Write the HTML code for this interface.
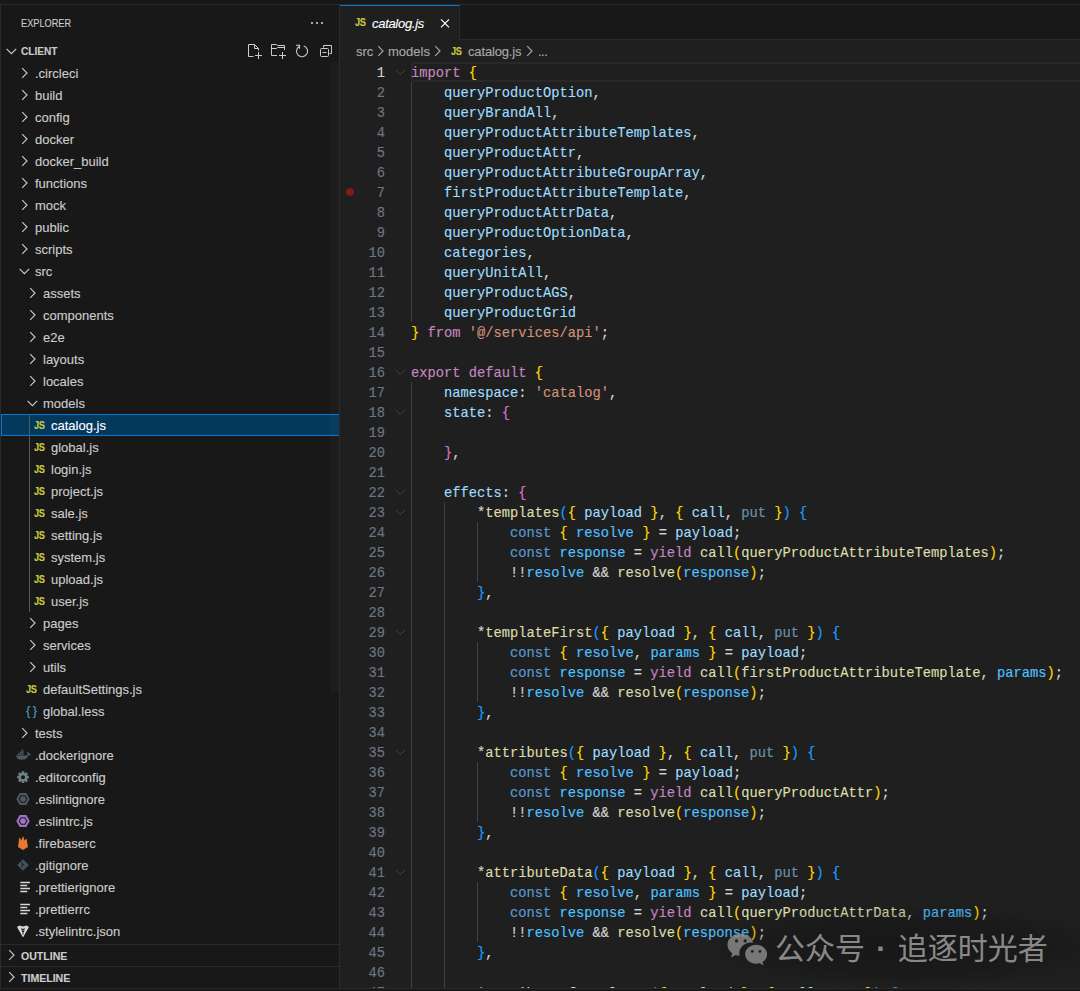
<!DOCTYPE html><html lang="en"><head><meta charset="utf-8"><title>catalog.js - client - Visual Studio Code</title><style>
*{box-sizing:border-box;margin:0;padding:0}
html,body{width:1080px;height:991px;overflow:hidden;background:#181818}
body{position:relative;font-family:"Liberation Sans",sans-serif;font-size:13px;color:#cccccc;-webkit-text-stroke:0.12px}
.abs{position:absolute}
#top{left:0;top:4px;width:1080px;height:1px;background:#2b2b2b}
#leftb{left:0;top:4px;width:1px;height:985px;background:#2b2b2b}
#botb{left:0;top:988px;width:1080px;height:1px;background:#2b2b2b}
#bot{left:0;top:989px;width:1080px;height:2px;background:#181818}
#side{left:1px;top:5px;width:339px;height:983px;background:#181818;border-right:1px solid #2b2b2b;overflow:hidden}
#ed{left:340px;top:5px;width:740px;height:983px;background:#1f1f1f;overflow:hidden}
.row{position:absolute;left:0;width:338px;height:22px;line-height:22px;white-space:nowrap;color:#cccccc}
.row .t{position:absolute;top:0}
.row svg{position:absolute}
.sel{background:#04395e;border:1px solid #0078d4;color:#ffffff;width:340px}
.js{position:absolute;top:1px;font-weight:bold;font-size:10px;color:#cbcb41;letter-spacing:-0.3px;display:inline-block;transform-origin:0 50%;transform:scaleX(.92)}
.hd{position:absolute;left:0;width:338px;height:22px;line-height:22px;font-size:11px;font-weight:bold;color:#cccccc}
.hd .t{position:absolute;left:20px;top:0;display:inline-block;transform-origin:0 50%;transform:scaleX(.92)}
.ln{position:absolute;left:0;width:45px;text-align:right;height:20px;line-height:24px;color:#6e7681}
.cl{position:absolute;left:71px;height:20px;line-height:24px;white-space:pre}
#code{font-family:"Liberation Mono",monospace;font-size:13.75px;color:#d4d4d4;-webkit-text-stroke:0.15px}
.k{color:#c586c0}.v{color:#9cdcfe}.c{color:#4fc1ff}.f{color:#dcdcaa}.s{color:#ce9178}.b{color:#569cd6}
.y{color:#ffd700}.p{color:#da70d6}.u{color:#179fff}.d{color:#9cdcfe;opacity:.6}
.ig{position:absolute;width:1px;background:#404040}
.fold{position:absolute;left:54px}
</style></head><body>
<div class="abs" id="top"></div>
<div class="abs" id="side">
<div class="abs" style="left:20px;top:9px;height:18px;line-height:18px;font-size:11px;color:#cccccc"><span style="display:inline-block;transform-origin:0 50%;transform:scaleX(.835)">EXPLORER</span></div>
<svg class="abs" style="left:308px;top:10px" width="16" height="16" viewBox="0 0 16 16"><circle cx="3" cy="8" r="1.1" fill="#ccc"/><circle cx="8" cy="8" r="1.1" fill="#ccc"/><circle cx="13" cy="8" r="1.1" fill="#ccc"/></svg>
<div class="hd" style="top:35px"><svg style="left:3px;top:3px" class="abs" width="16" height="16" viewBox="0 0 16 16"><path d="M2.6 5.8 L7.4 10.6 L12.2 5.8" fill="none" stroke="#cccccc" stroke-width="1.1"/></svg><span class="t">CLIENT</span>
<svg class="abs" style="left:245px;top:3px" width="16" height="16" viewBox="0 0 16 16" fill="none" stroke="#ccc" stroke-width="1"><path d="M7.5 13.5H2.5V1.5H8.5L12.500 5.500V7.500"/><path d="M8.5 1.5V5.5H12.5"/><path d="M12.500 9V16M9 12.500H16"/></svg>
<svg class="abs" style="left:269px;top:3px" width="16" height="16" viewBox="0 0 16 16" fill="none" stroke="#ccc" stroke-width="1"><path d="M7 12.500H1.500V1.500H6.300L7.500 2.500H14.500V7"/><path d="M1.500 5.500H6.500L7.500 4.500H14.500"/><path d="M12.500 9V16M9 12.500H16"/></svg>
<svg class="abs" style="left:293px;top:3px" width="16" height="16" viewBox="0 0 16 16" fill="none" stroke="#ccc" stroke-width="1.1"><g transform="translate(0 -.3)"><path d="M5.200 3.800A5.500 5.500 0 1 0 9.700 3.270"/><path d="M2 2.500H5.500V6"/></g></svg>
<svg class="abs" style="left:317px;top:3px" width="16" height="16" viewBox="0 0 16 16" fill="none" stroke="#ccc" stroke-width="1"><path d="M5.5 4.5V2.5H13.5V10.5H11.5"/><rect x="2.5" y="5.5" width="8" height="8" rx="1"/><path d="M4.5 9.5H8.5"/></svg>
</div>
<div class="row" style="top:57px"><svg style="left:16px;top:3px" class="abs" width="16" height="16" viewBox="0 0 16 16"><path d="M5.2 3.2 L10 8 L5.2 12.8" fill="none" stroke="#cccccc" stroke-width="1.1"/></svg><span class="t" style="left:34px;top:1px">.circleci</span></div>
<div class="row" style="top:79px"><svg style="left:16px;top:3px" class="abs" width="16" height="16" viewBox="0 0 16 16"><path d="M5.2 3.2 L10 8 L5.2 12.8" fill="none" stroke="#cccccc" stroke-width="1.1"/></svg><span class="t" style="left:34px;top:1px">build</span></div>
<div class="row" style="top:101px"><svg style="left:16px;top:3px" class="abs" width="16" height="16" viewBox="0 0 16 16"><path d="M5.2 3.2 L10 8 L5.2 12.8" fill="none" stroke="#cccccc" stroke-width="1.1"/></svg><span class="t" style="left:34px;top:1px">config</span></div>
<div class="row" style="top:123px"><svg style="left:16px;top:3px" class="abs" width="16" height="16" viewBox="0 0 16 16"><path d="M5.2 3.2 L10 8 L5.2 12.8" fill="none" stroke="#cccccc" stroke-width="1.1"/></svg><span class="t" style="left:34px;top:1px">docker</span></div>
<div class="row" style="top:145px"><svg style="left:16px;top:3px" class="abs" width="16" height="16" viewBox="0 0 16 16"><path d="M5.2 3.2 L10 8 L5.2 12.8" fill="none" stroke="#cccccc" stroke-width="1.1"/></svg><span class="t" style="left:34px;top:1px">docker_build</span></div>
<div class="row" style="top:167px"><svg style="left:16px;top:3px" class="abs" width="16" height="16" viewBox="0 0 16 16"><path d="M5.2 3.2 L10 8 L5.2 12.8" fill="none" stroke="#cccccc" stroke-width="1.1"/></svg><span class="t" style="left:34px;top:1px">functions</span></div>
<div class="row" style="top:189px"><svg style="left:16px;top:3px" class="abs" width="16" height="16" viewBox="0 0 16 16"><path d="M5.2 3.2 L10 8 L5.2 12.8" fill="none" stroke="#cccccc" stroke-width="1.1"/></svg><span class="t" style="left:34px;top:1px">mock</span></div>
<div class="row" style="top:211px"><svg style="left:16px;top:3px" class="abs" width="16" height="16" viewBox="0 0 16 16"><path d="M5.2 3.2 L10 8 L5.2 12.8" fill="none" stroke="#cccccc" stroke-width="1.1"/></svg><span class="t" style="left:34px;top:1px">public</span></div>
<div class="row" style="top:233px"><svg style="left:16px;top:3px" class="abs" width="16" height="16" viewBox="0 0 16 16"><path d="M5.2 3.2 L10 8 L5.2 12.8" fill="none" stroke="#cccccc" stroke-width="1.1"/></svg><span class="t" style="left:34px;top:1px">scripts</span></div>
<div class="row" style="top:255px"><svg style="left:16px;top:3px" class="abs" width="16" height="16" viewBox="0 0 16 16"><path d="M2.6 5.8 L7.4 10.6 L12.2 5.8" fill="none" stroke="#cccccc" stroke-width="1.1"/></svg><span class="t" style="left:34px;top:1px">src</span></div>
<div class="row" style="top:277px"><svg style="left:24px;top:3px" class="abs" width="16" height="16" viewBox="0 0 16 16"><path d="M5.2 3.2 L10 8 L5.2 12.8" fill="none" stroke="#cccccc" stroke-width="1.1"/></svg><span class="t" style="left:42px;top:1px">assets</span></div>
<div class="row" style="top:299px"><svg style="left:24px;top:3px" class="abs" width="16" height="16" viewBox="0 0 16 16"><path d="M5.2 3.2 L10 8 L5.2 12.8" fill="none" stroke="#cccccc" stroke-width="1.1"/></svg><span class="t" style="left:42px;top:1px">components</span></div>
<div class="row" style="top:321px"><svg style="left:24px;top:3px" class="abs" width="16" height="16" viewBox="0 0 16 16"><path d="M5.2 3.2 L10 8 L5.2 12.8" fill="none" stroke="#cccccc" stroke-width="1.1"/></svg><span class="t" style="left:42px;top:1px">e2e</span></div>
<div class="row" style="top:343px"><svg style="left:24px;top:3px" class="abs" width="16" height="16" viewBox="0 0 16 16"><path d="M5.2 3.2 L10 8 L5.2 12.8" fill="none" stroke="#cccccc" stroke-width="1.1"/></svg><span class="t" style="left:42px;top:1px">layouts</span></div>
<div class="row" style="top:365px"><svg style="left:24px;top:3px" class="abs" width="16" height="16" viewBox="0 0 16 16"><path d="M5.2 3.2 L10 8 L5.2 12.8" fill="none" stroke="#cccccc" stroke-width="1.1"/></svg><span class="t" style="left:42px;top:1px">locales</span></div>
<div class="row" style="top:387px"><svg style="left:24px;top:3px" class="abs" width="16" height="16" viewBox="0 0 16 16"><path d="M2.6 5.8 L7.4 10.6 L12.2 5.8" fill="none" stroke="#cccccc" stroke-width="1.1"/></svg><span class="t" style="left:42px;top:1px">models</span></div>
<div class="row sel" style="top:409px"><span class="js" style="left:32px;top:0px">JS</span><span class="t" style="left:49px;top:0px">catalog.js</span></div>
<div class="row" style="top:431px"><span class="js" style="left:33px;top:1px">JS</span><span class="t" style="left:50px;top:1px">global.js</span></div>
<div class="row" style="top:453px"><span class="js" style="left:33px;top:1px">JS</span><span class="t" style="left:50px;top:1px">login.js</span></div>
<div class="row" style="top:475px"><span class="js" style="left:33px;top:1px">JS</span><span class="t" style="left:50px;top:1px">project.js</span></div>
<div class="row" style="top:497px"><span class="js" style="left:33px;top:1px">JS</span><span class="t" style="left:50px;top:1px">sale.js</span></div>
<div class="row" style="top:519px"><span class="js" style="left:33px;top:1px">JS</span><span class="t" style="left:50px;top:1px">setting.js</span></div>
<div class="row" style="top:541px"><span class="js" style="left:33px;top:1px">JS</span><span class="t" style="left:50px;top:1px">system.js</span></div>
<div class="row" style="top:563px"><span class="js" style="left:33px;top:1px">JS</span><span class="t" style="left:50px;top:1px">upload.js</span></div>
<div class="row" style="top:585px"><span class="js" style="left:33px;top:1px">JS</span><span class="t" style="left:50px;top:1px">user.js</span></div>
<div class="row" style="top:607px"><svg style="left:24px;top:3px" class="abs" width="16" height="16" viewBox="0 0 16 16"><path d="M5.2 3.2 L10 8 L5.2 12.8" fill="none" stroke="#cccccc" stroke-width="1.1"/></svg><span class="t" style="left:42px;top:1px">pages</span></div>
<div class="row" style="top:629px"><svg style="left:24px;top:3px" class="abs" width="16" height="16" viewBox="0 0 16 16"><path d="M5.2 3.2 L10 8 L5.2 12.8" fill="none" stroke="#cccccc" stroke-width="1.1"/></svg><span class="t" style="left:42px;top:1px">services</span></div>
<div class="row" style="top:651px"><svg style="left:24px;top:3px" class="abs" width="16" height="16" viewBox="0 0 16 16"><path d="M5.2 3.2 L10 8 L5.2 12.8" fill="none" stroke="#cccccc" stroke-width="1.1"/></svg><span class="t" style="left:42px;top:1px">utils</span></div>
<div class="row" style="top:673px"><span class="js" style="left:25px;top:1px">JS</span><span class="t" style="left:42px;top:1px">defaultSettings.js</span></div>
<div class="row" style="top:695px"><span class="abs" style="left:25px;top:0;font-size:13px;color:#519aba;letter-spacing:2.5px">{}</span><span class="t" style="left:42px;top:1px">global.less</span></div>
<div class="row" style="top:717px"><svg style="left:16px;top:3px" class="abs" width="16" height="16" viewBox="0 0 16 16"><path d="M5.2 3.2 L10 8 L5.2 12.8" fill="none" stroke="#cccccc" stroke-width="1.1"/></svg><span class="t" style="left:34px;top:1px">tests</span></div>
<div class="row" style="top:739px"><svg style="left:14px;top:3px" width="16" height="16" viewBox="0 0 16 16"><g transform="translate(0.3 1.6) scale(.97 .9)"><path fill="#4d5a5e" d="M.8 7.600h10.700c.5-.2.900-.7 1-1.400.1-.8-.1-1.500-.5-2 .6-.5 1.300-.4 1.700.2.300.5.400 1 .3 1.500.7-.3 1.500-.3 2.200.1-.5 1.100-1.400 1.700-2.700 1.800-1 3-3.400 4.700-6.800 4.700-3.700 0-5.600-1.800-5.900-4.900z"/><path fill="#4d5a5e" d="M2.400 5.400h1.800v1.800H2.400zM4.500 5.400h1.800v1.800H4.500zM6.600 5.400h1.800v1.800H6.600zM4.500 3.300h1.800v1.800H4.500zM6.600 3.300h1.800v1.800H6.600zM6.600 1.200h1.800v1.800H6.600z"/></g></svg><span class="t" style="left:34px;top:1px">.dockerignore</span></div>
<div class="row" style="top:761px"><svg style="left:14px;top:3px" width="16" height="16" viewBox="0 0 16 16"><g transform="translate(8 8.200) scale(.95)"><g fill="#6d8086"><rect x="-1.400" y="-6.2" width="2.800" height="12.400" rx=".5"/><rect x="-1.400" y="-6.2" width="2.800" height="12.400" rx=".5" transform="rotate(45)"/><rect x="-1.400" y="-6.2" width="2.800" height="12.400" rx=".5" transform="rotate(90)"/><rect x="-1.400" y="-6.2" width="2.800" height="12.400" rx=".5" transform="rotate(135)"/><circle r="4.600"/></g><circle r="2.100" fill="#181818"/></g></svg><span class="t" style="left:34px;top:1px">.editorconfig</span></div>
<div class="row" style="top:783px"><svg style="left:14px;top:3px" width="16" height="16" viewBox="0 0 16 16"><path fill="#4d5a5e" d="M4.700 2h6.600L14.700 8l-3.400 6H4.700L1.300 8z"/><path fill="none" stroke="#1b1b1b" stroke-width="1.100" d="M6.100 4.700h3.800L11.800 8l-1.900 3.300H6.100L4.200 8z"/></svg><span class="t" style="left:34px;top:1px">.eslintignore</span></div>
<div class="row" style="top:805px"><svg style="left:14px;top:3px" width="16" height="16" viewBox="0 0 16 16"><path fill="#a074c4" d="M4.700 2h6.600L14.700 8l-3.400 6H4.700L1.300 8z"/><path fill="none" stroke="#1b1b1b" stroke-width="1.100" d="M6.100 4.700h3.800L11.800 8l-1.900 3.300H6.100L4.200 8z"/></svg><span class="t" style="left:34px;top:1px">.eslintrc.js</span></div>
<div class="row" style="top:827px"><svg style="left:14px;top:3px" width="16" height="16" viewBox="0 0 16 16"><path fill="#e37933" d="M3 12 L4.300 2.200 L6.400 5.200 L8 1 L9.700 5.600 L11.600 3.600 L13 12 L8 15 z"/></svg><span class="t" style="left:34px;top:1px">.firebaserc</span></div>
<div class="row" style="top:849px"><svg style="left:14px;top:3px" width="16" height="16" viewBox="0 0 16 16"><path fill="#41535b" d="M8 2.200L13.800 8 8 13.800 2.200 8z"/><path stroke="#181818" stroke-width=".9" fill="none" d="M7.300 5.500v5M7.300 6.500l2.200 2"/></svg><span class="t" style="left:34px;top:1px">.gitignore</span></div>
<div class="row" style="top:871px"><svg style="left:14px;top:3px" width="16" height="16" viewBox="0 0 16 16"><path stroke="#d4d7d6" stroke-width="1.300" d="M5.300 3.500h9.700M5.300 6.500h7M5.300 9.500h9.700M5.300 12.500h7"/></svg><span class="t" style="left:34px;top:1px">.prettierignore</span></div>
<div class="row" style="top:893px"><svg style="left:14px;top:3px" width="16" height="16" viewBox="0 0 16 16"><path stroke="#d4d7d6" stroke-width="1.300" d="M5.300 3.500h9.700M5.300 6.500h7M5.300 9.500h9.700M5.300 12.500h7"/></svg><span class="t" style="left:34px;top:1px">.prettierrc</span></div>
<div class="row" style="top:915px"><svg style="left:14px;top:3px" width="16" height="16" viewBox="0 0 16 16"><g transform="translate(8 8.500) scale(.92) translate(-8 -8.500)"><path fill="#d4d7d6" d="M1.500 3.500l2.500-1.500 4 1.200 4-1.200 2.500 1.500L8 15z"/><path fill="#181818" d="M6.200 4.500L8 6l1.800-1.500L9.300 8 8 12.500 6.700 8z"/><path fill="#d4d7d6" d="M7.500 7h1v1h-1zM7.500 9h1v1h-1z"/></g></svg><span class="t" style="left:34px;top:1px">.stylelintrc.json</span></div>
<div class="abs" style="left:28px;top:409px;width:1px;height:198px;background:#585858"></div>
<div class="abs" style="left:329px;top:57px;width:9px;height:631px;background:rgba(121,121,121,.06)"></div>
<div class="hd" style="top:939px;border-top:1px solid #2b2b2b"><svg style="left:3px;top:2px" class="abs" width="16" height="16" viewBox="0 0 16 16"><path d="M5.2 3.2 L10 8 L5.2 12.8" fill="none" stroke="#cccccc" stroke-width="1.1"/></svg><span class="t" style="top:0;transform:scaleX(.96)">OUTLINE</span></div>
<div class="hd" style="top:961px;border-top:1px solid #2b2b2b"><svg style="left:3px;top:2px" class="abs" width="16" height="16" viewBox="0 0 16 16"><path d="M5.2 3.2 L10 8 L5.2 12.8" fill="none" stroke="#cccccc" stroke-width="1.1"/></svg><span class="t" style="top:0;transform:scaleX(.96)">TIMELINE</span></div>
</div>
<div class="abs" id="ed">
<div class="abs" style="left:0;top:0;width:740px;height:35px;background:#181818;border-bottom:1px solid #2b2b2b"></div>
<div class="abs" style="left:0;top:0;width:120px;height:35px;background:#1f1f1f;border-top:1px solid #0078d4;border-right:1px solid #2b2b2b"></div>
<span class="abs" style="left:15px;top:11px;line-height:14px;font-weight:bold;font-size:10px;color:#cbcb41;letter-spacing:-0.3px;display:inline-block;transform-origin:0 50%;transform:scaleX(.92)">JS</span>
<span class="abs" style="left:32px;top:7.5px;line-height:22px;font-style:italic;color:#ffffff;letter-spacing:-0.3px">catalog.js</span>
<svg class="abs" style="left:97px;top:10px" width="16" height="16" viewBox="0 0 16 16"><path d="M4 4.400L12 12.400M12 4.400L4 12.400" stroke="#ffffff" stroke-width="1.200" fill="none"/></svg>
<div class="abs" style="left:16px;top:35px;height:22px;line-height:24px;color:#a9a9a9;white-space:nowrap"><span class="abs" style="left:0">src</span><svg style="left:16.5px;top:3px" class="abs" width="16" height="16" viewBox="0 0 16 16"><path d="M5.2 3.2 L10 8 L5.2 12.8" fill="none" stroke="#a9a9a9" stroke-width="1.1"/></svg><span class="abs" style="left:32px">models</span><svg style="left:74px;top:3px" class="abs" width="16" height="16" viewBox="0 0 16 16"><path d="M5.2 3.2 L10 8 L5.2 12.8" fill="none" stroke="#a9a9a9" stroke-width="1.1"/></svg><span class="abs" style="left:95px;font-weight:bold;font-size:10px;color:#cbcb41;letter-spacing:-0.3px;display:inline-block;transform-origin:0 50%;transform:scaleX(.92)">JS</span><span class="abs" style="left:112px;letter-spacing:-0.15px">catalog.js</span><svg style="left:166px;top:3px" class="abs" width="16" height="16" viewBox="0 0 16 16"><path d="M5.2 3.2 L10 8 L5.2 12.8" fill="none" stroke="#a9a9a9" stroke-width="1.1"/></svg><span class="abs" style="left:182px;letter-spacing:-0.5px">...</span></div>
<div id="code" class="abs" style="left:0;top:57px;width:740px;height:926px">
<div class="abs" style="left:71px;top:0;width:700px;height:20px;border:2px solid #282828"></div>
<div class="ln" style="top:0px;color:#cccccc">1</div>
<svg style="left:53px;top:2px" class="abs" width="16" height="16" viewBox="0 0 16 16"><path d="M2.6 5.8 L7.4 10.6 L12.2 5.8" fill="none" stroke="#454545" stroke-width="1.0"/></svg>
<div class="cl" style="top:0px"><span class="k">import</span> <span class="y">{</span></div>
<div class="ln" style="top:20px">2</div>
<div class="cl" style="top:20px">    <span class="v">queryProductOption</span>,</div>
<div class="ln" style="top:40px">3</div>
<div class="cl" style="top:40px">    <span class="v">queryBrandAll</span>,</div>
<div class="ln" style="top:60px">4</div>
<div class="cl" style="top:60px">    <span class="v">queryProductAttributeTemplates</span>,</div>
<div class="ln" style="top:80px">5</div>
<div class="cl" style="top:80px">    <span class="v">queryProductAttr</span>,</div>
<div class="ln" style="top:100px">6</div>
<div class="cl" style="top:100px">    <span class="v">queryProductAttributeGroupArray</span>,</div>
<div class="ln" style="top:120px">7</div>
<div class="cl" style="top:120px">    <span class="v">firstProductAttributeTemplate</span>,</div>
<div class="ln" style="top:140px">8</div>
<div class="cl" style="top:140px">    <span class="v">queryProductAttrData</span>,</div>
<div class="ln" style="top:160px">9</div>
<div class="cl" style="top:160px">    <span class="v">queryProductOptionData</span>,</div>
<div class="ln" style="top:180px">10</div>
<div class="cl" style="top:180px">    <span class="v">categories</span>,</div>
<div class="ln" style="top:200px">11</div>
<div class="cl" style="top:200px">    <span class="v">queryUnitAll</span>,</div>
<div class="ln" style="top:220px">12</div>
<div class="cl" style="top:220px">    <span class="v">queryProductAGS</span>,</div>
<div class="ln" style="top:240px">13</div>
<div class="cl" style="top:240px">    <span class="v">queryProductGrid</span></div>
<div class="ln" style="top:260px">14</div>
<div class="cl" style="top:260px"><span class="y">}</span> <span class="k">from</span> <span class="s">&#x27;@/services/api&#x27;</span>;</div>
<div class="ln" style="top:280px">15</div>
<div class="ln" style="top:300px">16</div>
<svg style="left:53px;top:302px" class="abs" width="16" height="16" viewBox="0 0 16 16"><path d="M2.6 5.8 L7.4 10.6 L12.2 5.8" fill="none" stroke="#454545" stroke-width="1.0"/></svg>
<div class="cl" style="top:300px"><span class="k">export</span> <span class="k">default</span> <span class="y">{</span></div>
<div class="ln" style="top:320px">17</div>
<div class="cl" style="top:320px">    <span class="v">namespace</span>: <span class="s">&#x27;catalog&#x27;</span>,</div>
<div class="ln" style="top:340px">18</div>
<svg style="left:53px;top:342px" class="abs" width="16" height="16" viewBox="0 0 16 16"><path d="M2.6 5.8 L7.4 10.6 L12.2 5.8" fill="none" stroke="#454545" stroke-width="1.0"/></svg>
<div class="cl" style="top:340px">    <span class="v">state</span>: <span class="p">{</span></div>
<div class="ln" style="top:360px">19</div>
<div class="ln" style="top:380px">20</div>
<div class="cl" style="top:380px">    <span class="p">}</span>,</div>
<div class="ln" style="top:400px">21</div>
<div class="ln" style="top:420px">22</div>
<svg style="left:53px;top:422px" class="abs" width="16" height="16" viewBox="0 0 16 16"><path d="M2.6 5.8 L7.4 10.6 L12.2 5.8" fill="none" stroke="#454545" stroke-width="1.0"/></svg>
<div class="cl" style="top:420px">    <span class="v">effects</span>: <span class="p">{</span></div>
<div class="ln" style="top:440px">23</div>
<svg style="left:53px;top:442px" class="abs" width="16" height="16" viewBox="0 0 16 16"><path d="M2.6 5.8 L7.4 10.6 L12.2 5.8" fill="none" stroke="#454545" stroke-width="1.0"/></svg>
<div class="cl" style="top:440px">        *<span class="f">templates</span><span class="u">(</span><span class="y">{</span> <span class="v">payload</span> <span class="y">}</span>, <span class="y">{</span> <span class="v">call</span>, <span class="d">put</span> <span class="y">}</span><span class="u">)</span> <span class="u">{</span></div>
<div class="ln" style="top:460px">24</div>
<div class="cl" style="top:460px">            <span class="b">const</span> <span class="y">{</span> <span class="c">resolve</span> <span class="y">}</span> = <span class="v">payload</span>;</div>
<div class="ln" style="top:480px">25</div>
<div class="cl" style="top:480px">            <span class="b">const</span> <span class="c">response</span> = <span class="k">yield</span> <span class="f">call</span><span class="y">(</span><span class="f">queryProductAttributeTemplates</span><span class="y">)</span>;</div>
<div class="ln" style="top:500px">26</div>
<div class="cl" style="top:500px">            !!<span class="c">resolve</span> && <span class="f">resolve</span><span class="y">(</span><span class="c">response</span><span class="y">)</span>;</div>
<div class="ln" style="top:520px">27</div>
<div class="cl" style="top:520px">        <span class="u">}</span>,</div>
<div class="ln" style="top:540px">28</div>
<div class="ln" style="top:560px">29</div>
<svg style="left:53px;top:562px" class="abs" width="16" height="16" viewBox="0 0 16 16"><path d="M2.6 5.8 L7.4 10.6 L12.2 5.8" fill="none" stroke="#454545" stroke-width="1.0"/></svg>
<div class="cl" style="top:560px">        *<span class="f">templateFirst</span><span class="u">(</span><span class="y">{</span> <span class="v">payload</span> <span class="y">}</span>, <span class="y">{</span> <span class="v">call</span>, <span class="d">put</span> <span class="y">}</span><span class="u">)</span> <span class="u">{</span></div>
<div class="ln" style="top:580px">30</div>
<div class="cl" style="top:580px">            <span class="b">const</span> <span class="y">{</span> <span class="c">resolve</span>, <span class="c">params</span> <span class="y">}</span> = <span class="v">payload</span>;</div>
<div class="ln" style="top:600px">31</div>
<div class="cl" style="top:600px">            <span class="b">const</span> <span class="c">response</span> = <span class="k">yield</span> <span class="f">call</span><span class="y">(</span><span class="f">firstProductAttributeTemplate</span>, <span class="c">params</span><span class="y">)</span>;</div>
<div class="ln" style="top:620px">32</div>
<div class="cl" style="top:620px">            !!<span class="c">resolve</span> && <span class="f">resolve</span><span class="y">(</span><span class="c">response</span><span class="y">)</span>;</div>
<div class="ln" style="top:640px">33</div>
<div class="cl" style="top:640px">        <span class="u">}</span>,</div>
<div class="ln" style="top:660px">34</div>
<div class="ln" style="top:680px">35</div>
<svg style="left:53px;top:682px" class="abs" width="16" height="16" viewBox="0 0 16 16"><path d="M2.6 5.8 L7.4 10.6 L12.2 5.8" fill="none" stroke="#454545" stroke-width="1.0"/></svg>
<div class="cl" style="top:680px">        *<span class="f">attributes</span><span class="u">(</span><span class="y">{</span> <span class="v">payload</span> <span class="y">}</span>, <span class="y">{</span> <span class="v">call</span>, <span class="d">put</span> <span class="y">}</span><span class="u">)</span> <span class="u">{</span></div>
<div class="ln" style="top:700px">36</div>
<div class="cl" style="top:700px">            <span class="b">const</span> <span class="y">{</span> <span class="c">resolve</span> <span class="y">}</span> = <span class="v">payload</span>;</div>
<div class="ln" style="top:720px">37</div>
<div class="cl" style="top:720px">            <span class="b">const</span> <span class="c">response</span> = <span class="k">yield</span> <span class="f">call</span><span class="y">(</span><span class="f">queryProductAttr</span><span class="y">)</span>;</div>
<div class="ln" style="top:740px">38</div>
<div class="cl" style="top:740px">            !!<span class="c">resolve</span> && <span class="f">resolve</span><span class="y">(</span><span class="c">response</span><span class="y">)</span>;</div>
<div class="ln" style="top:760px">39</div>
<div class="cl" style="top:760px">        <span class="u">}</span>,</div>
<div class="ln" style="top:780px">40</div>
<div class="ln" style="top:800px">41</div>
<svg style="left:53px;top:802px" class="abs" width="16" height="16" viewBox="0 0 16 16"><path d="M2.6 5.8 L7.4 10.6 L12.2 5.8" fill="none" stroke="#454545" stroke-width="1.0"/></svg>
<div class="cl" style="top:800px">        *<span class="f">attributeData</span><span class="u">(</span><span class="y">{</span> <span class="v">payload</span> <span class="y">}</span>, <span class="y">{</span> <span class="v">call</span>, <span class="d">put</span> <span class="y">}</span><span class="u">)</span> <span class="u">{</span></div>
<div class="ln" style="top:820px">42</div>
<div class="cl" style="top:820px">            <span class="b">const</span> <span class="y">{</span> <span class="c">resolve</span>, <span class="c">params</span> <span class="y">}</span> = <span class="v">payload</span>;</div>
<div class="ln" style="top:840px">43</div>
<div class="cl" style="top:840px">            <span class="b">const</span> <span class="c">response</span> = <span class="k">yield</span> <span class="f">call</span><span class="y">(</span><span class="f">queryProductAttrData</span>, <span class="c">params</span><span class="y">)</span>;</div>
<div class="ln" style="top:860px">44</div>
<div class="cl" style="top:860px">            !!<span class="c">resolve</span> && <span class="f">resolve</span><span class="y">(</span><span class="c">response</span><span class="y">)</span>;</div>
<div class="ln" style="top:880px">45</div>
<div class="cl" style="top:880px">        <span class="u">}</span>,</div>
<div class="ln" style="top:900px">46</div>
<div class="ln" style="top:920px">47</div>
<svg style="left:53px;top:922px" class="abs" width="16" height="16" viewBox="0 0 16 16"><path d="M2.6 5.8 L7.4 10.6 L12.2 5.8" fill="none" stroke="#454545" stroke-width="1.0"/></svg>
<div class="cl" style="top:921px">        *<span class="f">attributeOfTemplates</span><span class="u">(</span><span class="y">{</span> <span class="v">payload</span> <span class="y">}</span>, <span class="y">{</span> <span class="v">call</span>, <span class="d">put</span> <span class="y">}</span><span class="u">)</span> <span class="u">{</span></div>
<div class="ig" style="left:71px;top:20px;height:240px"></div>
<div class="ig" style="left:71px;top:320px;height:620px"></div>
<div class="ig" style="left:104px;top:440px;height:500px"></div>
<div class="ig" style="left:137px;top:460px;height:60px"></div>
<div class="ig" style="left:137px;top:580px;height:60px"></div>
<div class="ig" style="left:137px;top:700px;height:60px"></div>
<div class="ig" style="left:137px;top:820px;height:60px"></div>
<div class="abs" style="left:6px;top:126px;width:8px;height:8px;border-radius:50%;background:#7a1f14"></div>
</div>
</div>
<div class="abs" id="leftb"></div><div class="abs" id="botb"></div><div class="abs" id="bot"></div>
<div class="abs" style="left:700px;top:905px;width:380px;height:83px;background:radial-gradient(ellipse at 55% 50%, rgba(10,10,10,.35) 0%, rgba(10,10,10,.25) 45%, rgba(10,10,10,0) 72%)"></div>
<svg class="abs" style="left:726px;top:930px" width="44" height="38" viewBox="0 0 46 40" preserveAspectRatio="none"><g fill="#8e8e8e" fill-opacity=".8"><path d="M15.500 4C8 4 1.500 9 1.500 15.500c0 3.600 2 6.800 5 9l-1.300 4.500 5-2.600c1.300.4 2.600.6 4 .7-.2-.9-.3-1.700-.3-2.600 0-6.300 5.800-11.300 13-11.300.5 0 1 0 1.500.1C27.500 8 22 4 15.500 4z"/><path d="M43 25.500C43 20 37.800 15.500 31.500 15.500S20 20 20 25.500 25.200 35.500 31.500 35.500c1.300 0 2.600-.2 3.800-.5l4 2.300-1.100-3.600c3-1.900 4.800-4.800 4.800-8.200z"/></g><g fill="#1f1f1f"><circle cx="11" cy="11.500" r="1.700"/><circle cx="20" cy="11.500" r="1.700"/><circle cx="27.500" cy="22.500" r="1.500"/><circle cx="35.500" cy="22.500" r="1.500"/></g></svg>
<div class="abs" style="left:775px;top:929px;height:40px;line-height:40px;font-family:'Liberation Sans','Noto Sans CJK SC',sans-serif;font-size:30px;font-weight:400;color:rgba(152,152,152,.9);white-space:nowrap;word-spacing:3px">公众号 <span style="font-weight:bold">·</span> 追逐时光者</div>
</body></html>
